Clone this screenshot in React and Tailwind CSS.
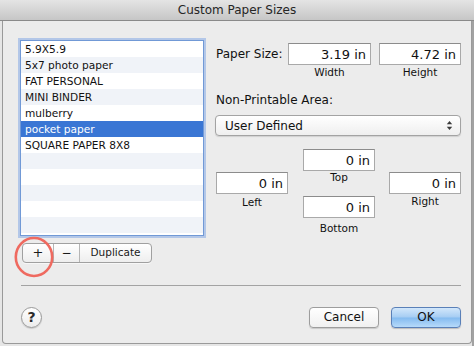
import React from "react";

const FONT = { fontFamily: '"DejaVu Sans", "Liberation Sans", sans-serif' };

const items = [
  "5.9X5.9",
  "5x7 photo paper",
  "FAT PERSONAL",
  "MINI BINDER",
  "mulberry",
  "pocket paper",
  "SQUARE PAPER 8X8",
  "", "", "", "", "", "",
];

function Field({ value, w }) {
  return (
    <div
      className={`${w} h-[22px] bg-white border border-[#a9a9a9] border-t-[#8c8c8c] flex items-center justify-end pr-[4px] text-[13px] leading-none text-[#111]`}
    >
      {value}
    </div>
  );
}

function Small({ children, className = "" }) {
  return (
    <div className={`text-[10.5px] leading-[13px] text-[#111] text-center ${className}`}>
      {children}
    </div>
  );
}

export default function App() {
  return (
    <div
      className="w-[474px] h-[346px] overflow-hidden flex flex-col bg-[linear-gradient(to_right,#e6e6e6_472px,#a2a2a2_472px)]"
      style={FONT}
    >
      {/* title bar */}
      <div className="h-[21px] shrink-0 border-b border-[#8a8a8a] bg-[linear-gradient(to_bottom,#e4e4e4,#c6c6c6)] flex items-center justify-center text-[12px] text-[#262626]">
        Custom Paper Sizes
      </div>

      {/* sheet body */}
      <div className="relative ml-[2px] w-[470px] h-[323px] shrink-0 bg-[#ececec] border-x border-b border-[#9a9a9a] rounded-b-[4px] pl-[17px] pt-[19px]">
        <div className="flex">
          {/* left column */}
          <div className="w-[184px] flex flex-col">
            <div className="h-[196px] border border-[#7199d6] shadow-[0_0_0_2px_rgba(133,170,230,0.55)] bg-white overflow-hidden">
              {items.map((t, i) => {
                const sel = i === 5;
                const bg = sel ? "bg-[#3a76d4] text-white" : i % 2 === 1 ? "bg-[#f0f3f8] text-[#111]" : "bg-white text-[#111]";
                return (
                  <div key={i} className={`h-[16px] pl-[4px] text-[10.6px] leading-[16px] whitespace-nowrap ${bg}`}>
                    {t}
                  </div>
                );
              })}
            </div>
            <div className="mt-[7px] ml-[2px] w-[130px] h-[20px] rounded-[4px] border border-[#a0a0a0] bg-[linear-gradient(to_bottom,#ffffff,#eeeeee)] flex items-center text-[#1a1a1a] shadow-[0_1px_0_rgba(255,255,255,0.6)]">
              <div className="w-[31px] h-full flex items-center justify-center text-[13px] border-r border-[#b5b5b5]">+</div>
              <div className="w-[26px] h-full flex items-center justify-center text-[12px] border-r border-[#b5b5b5]">−</div>
              <div className="flex-1 h-full flex items-center justify-center text-[10.5px]">Duplicate</div>
            </div>
          </div>

          {/* right column */}
          <div className="ml-[11px] w-[247px] flex flex-col">
            <div className="mt-[3px] flex items-center h-[22px]">
              <div className="w-[73px] pl-[1px] text-[12px] text-[#111]">Paper Size:</div>
              <Field value="3.19 in" w="w-[83px]" />
              <div className="ml-[8px]">
                <Field value="4.72 in" w="w-[82px]" />
              </div>
            </div>
            <div className="flex mt-[1px]">
              <div className="w-[73px]" />
              <Small className="w-[83px]">Width</Small>
              <Small className="w-[82px] ml-[8px]">Height</Small>
            </div>
            <div className="mt-[14px] pl-[1px] text-[12px] leading-[15px] text-[#111]">Non-Printable Area:</div>
            <div className="mt-[7px] w-[246px] h-[21px] rounded-[4px] border border-[#a3a3a3] bg-[linear-gradient(to_bottom,#ffffff,#efefef)] shadow-[0_1px_1px_rgba(0,0,0,0.12)] flex items-center pl-[9px] pr-[7px] text-[12px] text-[#111]">
              <span className="flex-1">User Defined</span>
              <svg width="7" height="11" viewBox="0 0 7 11">
                <path d="M3.5 1 L6.2 4.2 L0.8 4.2 Z" fill="#3a3a3a" />
                <path d="M3.5 10 L6.2 6.8 L0.8 6.8 Z" fill="#3a3a3a" />
              </svg>
            </div>

            <div className="mt-[13px] ml-[1px] flex">
              <div className="w-[72px] pt-[23px] flex flex-col">
                <Field value="0 in" w="w-[72px]" />
                <Small className="mt-[2px]">Left</Small>
              </div>
              <div className="ml-[15px] w-[72px] flex flex-col">
                <Field value="0 in" w="w-[72px]" />
                <Small className="mt-0">Top</Small>
                <div className="mt-[12px]">
                  <Field value="0 in" w="w-[72px]" />
                </div>
                <Small className="mt-[4px]">Bottom</Small>
              </div>
              <div className="ml-[14px] w-[72px] pt-[23px] flex flex-col">
                <Field value="0 in" w="w-[72px]" />
                <Small className="mt-[1px]">Right</Small>
              </div>
            </div>
          </div>
        </div>

        {/* separator */}
        <div className="mt-[22px] ml-[1px] w-[440px] h-px bg-[#a3a3a3]" />

        {/* bottom buttons */}
        <div className="mt-[20px] w-[441px] h-[22px] flex items-center">
          <div className="ml-[1px] w-[21px] h-[21px] rounded-full border border-[#9a9a9a] bg-[linear-gradient(to_bottom,#ffffff,#ececec)] shadow-[0_1px_1px_rgba(0,0,0,0.15)] flex items-center justify-center text-[14px] font-semibold text-[#2a2a2a]">
            ?
          </div>
          <div className="ml-auto w-[70px] h-[21px] rounded-[4px] border border-[#9d9d9d] bg-[linear-gradient(to_bottom,#ffffff,#f0f0f0)] shadow-[0_1px_1px_rgba(0,0,0,0.15)] flex items-center justify-center text-[12px] text-[#111]">
            Cancel
          </div>
          <div className="ml-[12px] w-[70px] h-[21px] rounded-[4px] border border-[#5a80b8] bg-[linear-gradient(to_bottom,#d2e7fb_0%,#a6cdf3_48%,#84bbf0_52%,#b6dafa_100%)] shadow-[0_1px_1px_rgba(0,0,0,0.2)] flex items-center justify-center text-[12px] text-[#111]">
            OK
          </div>
        </div>

        {/* red annotation circle */}
        <svg className="absolute left-[10px] top-[214px] pointer-events-none" width="42" height="44" viewBox="0 0 42 44">
          <ellipse cx="21" cy="22" rx="18.2" ry="19" fill="none" stroke="#ef6a60" strokeWidth="2.6" />
        </svg>
      </div>
    </div>
  );
}
